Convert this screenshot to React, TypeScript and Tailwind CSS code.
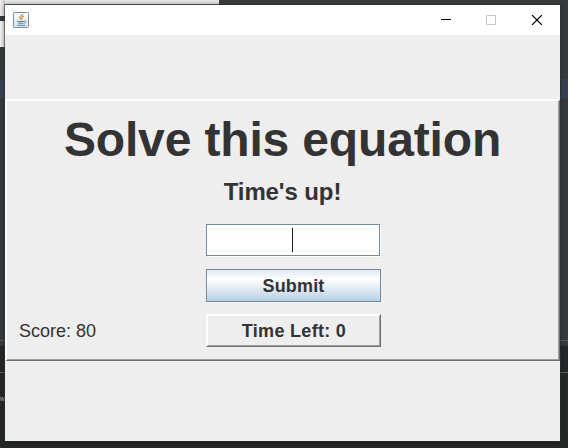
import React from "react";

function JavaIcon() {
  return (
    <svg width="16" height="16" viewBox="0 0 16 16" fill="none">
      <defs>
        <linearGradient id="tile" x1="0" y1="0" x2="0" y2="1">
          <stop offset="0" stopColor="#fff" />
          <stop offset="1" stopColor="#d5e1eb" />
        </linearGradient>
      </defs>
      <rect x="0.5" y="0.5" width="15" height="15" rx="0.8" fill="url(#tile)" stroke="#7c919f" />
      <path d="M10 2C9.6 3.6 6.4 4.2 6.7 5.8c.2.9.9 1.1 1 1.9M10.8 4.2C8.8 4.9 8.6 5.8 9 6.5c.3.6 0 .9-.5 1.3" stroke="#d98a36" strokeWidth="1.15" />
      <path d="M4 9.5h7M5.2 11.2h5.3M11.3 9.1c2.2-.7 2.3 1.4 0 2M4.2 13.3h8" stroke="#5581a6" strokeWidth="1" />
    </svg>
  );
}

function Backdrop() {
  return (
    <div className="absolute inset-0 overflow-hidden bg-[#262727]">
      <div className="flex h-full flex-col">
        <div className="h-[79px] shrink-0 bg-[#373b3c]" />
        <div className="h-[19px] shrink-0 bg-[#384153]" />
        <div className="h-[242px] shrink-0 bg-[#363a3c]" />
        <div className="h-px shrink-0 bg-[#55585a]" />
        <div className="h-[5px] shrink-0 bg-[#383b3e]" />
        <div className="h-[26px] shrink-0 bg-[#252627]" />
        <div className="h-px shrink-0 bg-[#606162]" />
      </div>
      <div className="absolute left-0 top-0 h-[5px] w-[219px] border-b border-[#686868] bg-gradient-to-b from-[#e8e8e8] to-[#d4d4d4]" />
      <div className="absolute left-0 top-0 flex h-[47px] w-[5px] flex-col">
        <div className="h-4 bg-gradient-to-r from-[#f0f0f2] to-[#c6c6c8]" />
        <div className="h-[5px] bg-[#343638]" />
        <div className="grow bg-gradient-to-r from-[#f5f5f5] to-[#cdcdcd]" />
      </div>
      <span className="absolute left-0 top-[393px] text-[7px] leading-[12px] text-[#b0b0b0]">w</span>
    </div>
  );
}

export default function App() {
  return (
    <main className="relative flex h-[448px] w-[568px] overflow-hidden pl-[5px] pt-[5px] font-['Liberation_Sans',Arial,sans-serif] text-[#333333]">
      <Backdrop />
      <section className="relative flex h-[436px] w-[555px] flex-col bg-[#eeeeee] shadow-[0_0_0_1px_rgba(45,48,50,0.5),0_1px_5px_rgba(0,0,0,0.35)]">
        <header className="flex h-[30px] shrink-0 items-center justify-between bg-white pl-2 pr-[18px]">
          <JavaIcon />
          <svg width="101" height="10" viewBox="0 0 101 10" fill="none" shapeRendering="crispEdges">
            <path d="M0 4.5h10" stroke="#000" />
            <rect x="45.5" y="0.5" width="9" height="9" stroke="#c8c8c8" />
            <path d="M91 0l10 10M101 0l-10 10" stroke="#000" shapeRendering="auto" strokeWidth="1.2" />
          </svg>
        </header>
        <div className="h-16 shrink-0" />
        <div className="flex h-[262px] shrink-0 flex-col border-b border-l-2 border-r border-t-2 border-b-[#6e6e6e] border-l-white border-r-[#6e6e6e] border-t-white">
          <div className="flex grow flex-col border-b border-r border-[#a0a0a0]">
            <h1 className="mt-[11px] h-[56px] whitespace-nowrap text-center text-[48px] font-bold leading-[56px] tracking-[-0.15px]">Solve this equation</h1>
            <h2 className="mt-[10px] h-7 text-center text-2xl font-bold leading-7 tracking-[-0.1px]">Time's up!</h2>
            <div className="ml-[199px] mt-[18px] flex h-8 w-[174px] items-center justify-center border border-[#7a8a99] bg-white pr-px shadow-[1px_1px_0_#fff]">
              <div className="h-6 w-px bg-[#222]" />
            </div>
            <button className="ml-[199px] mt-[13px] h-[33px] w-[175px] border border-[#7a8a99] bg-[linear-gradient(#dde8f3_0%,#ffffff_30%,#b8cfe5_100%)] pt-px text-lg font-bold leading-[31px] tracking-[0.15px]">Submit</button>
            <div className="mt-[12px] flex h-[33px]">
              <div className="w-[199px] pl-[12px] text-lg leading-[35px]">Score: 80</div>
              <div className="w-[175px] border border-b-[#6e6e6e] border-l-white border-r-[#6e6e6e] border-t-white">
                <div className="h-[31px] border border-b-[#a0a0a0] border-l-white border-r-[#a0a0a0] border-t-white pl-px pt-px text-center text-lg font-bold leading-[29px] tracking-[0.3px]">Time Left: 0</div>
              </div>
            </div>
          </div>
        </div>
        <div className="grow" />
      </section>
    </main>
  );
}
